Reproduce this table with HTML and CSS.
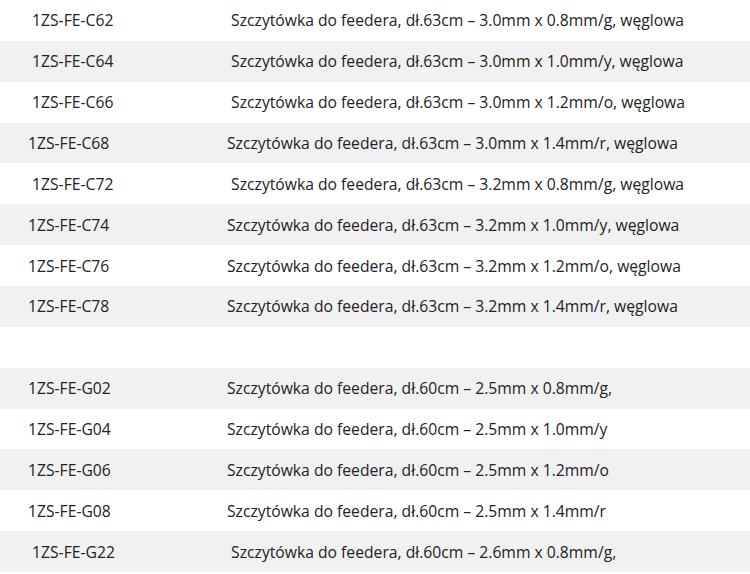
FILE: index.html
```html
<!DOCTYPE html>
<html lang="pl">
<head>
<meta charset="utf-8">
<link rel="stylesheet" href="styles.css">
</head>
<body>
<table class="parts">
<tbody>
<tr><td class="code">&nbsp;1ZS-FE-C62</td><td class="desc">&nbsp;Szczytówka do feedera, dł.63cm – 3.0mm x 0.8mm/g, węglowa</td></tr>
<tr><td class="code">&nbsp;1ZS-FE-C64</td><td class="desc">&nbsp;Szczytówka do feedera, dł.63cm – 3.0mm x 1.0mm/y, węglowa</td></tr>
<tr><td class="code">&nbsp;1ZS-FE-C66</td><td class="desc">&nbsp;Szczytówka do feedera, dł.63cm – 3.0mm x 1.2mm/o, węglowa</td></tr>
<tr><td class="code">1ZS-FE-C68</td><td class="desc">Szczytówka do feedera, dł.63cm – 3.0mm x 1.4mm/r, węglowa</td></tr>
<tr><td class="code">&nbsp;1ZS-FE-C72</td><td class="desc">&nbsp;Szczytówka do feedera, dł.63cm – 3.2mm x 0.8mm/g, węglowa</td></tr>
<tr><td class="code">1ZS-FE-C74</td><td class="desc">Szczytówka do feedera, dł.63cm – 3.2mm x 1.0mm/y, węglowa</td></tr>
<tr><td class="code">1ZS-FE-C76</td><td class="desc">Szczytówka do feedera, dł.63cm – 3.2mm x 1.2mm/o, węglowa</td></tr>
<tr><td class="code">1ZS-FE-C78</td><td class="desc">Szczytówka do feedera, dł.63cm – 3.2mm x 1.4mm/r, węglowa</td></tr>
<tr><td class="code"></td><td class="desc"></td></tr>
<tr><td class="code">1ZS-FE-G02</td><td class="desc">Szczytówka do feedera, dł.60cm – 2.5mm x 0.8mm/g,</td></tr>
<tr><td class="code">1ZS-FE-G04</td><td class="desc">Szczytówka do feedera, dł.60cm – 2.5mm x 1.0mm/y</td></tr>
<tr><td class="code">1ZS-FE-G06</td><td class="desc">Szczytówka do feedera, dł.60cm – 2.5mm x 1.2mm/o</td></tr>
<tr><td class="code">1ZS-FE-G08</td><td class="desc">Szczytówka do feedera, dł.60cm – 2.5mm x 1.4mm/r</td></tr>
<tr><td class="code">&nbsp;1ZS-FE-G22</td><td class="desc">&nbsp;Szczytówka do feedera, dł.60cm – 2.6mm x 0.8mm/g,</td></tr>
</tbody>
</table>
</body>
</html>
```
FILE: styles.css
```css
html, body {
  margin: 0;
  padding: 0;
  background: #ffffff;
}
body {
  font-family: "Open Sans", "Liberation Sans", sans-serif;
  font-size: 15.7px;
  color: #222222;
}
.parts {
  width: 750px;
  border-collapse: collapse;
  border-spacing: 0;
}
.parts tr {
  height: 40.86px;
}
.parts tr:nth-child(even) {
  background: #f1f1f1;
}
.parts td {
  padding: 0;
  vertical-align: middle;
  white-space: nowrap;
}
.parts .code {
  width: 199px;
  padding-left: 28px;
}
```
